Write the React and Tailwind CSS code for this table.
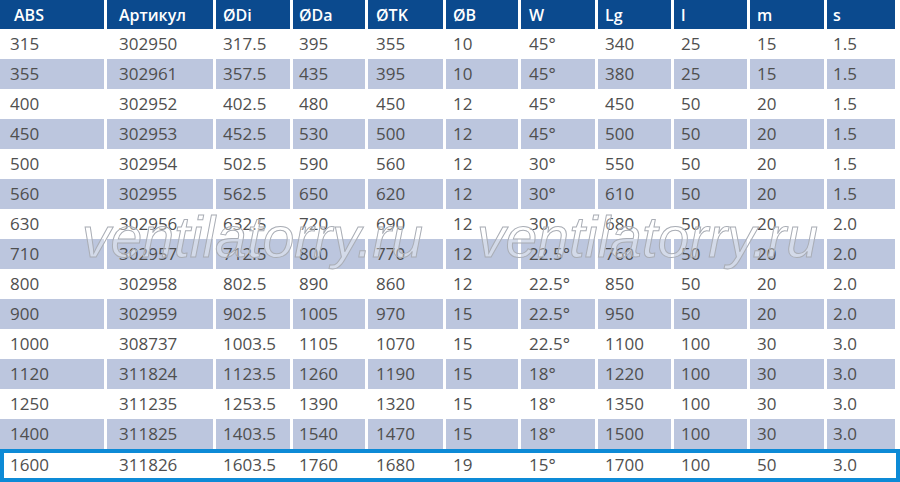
import React from "react";

const headers = ["ABS", "Артикул", "ØDi", "ØDa", "ØTK", "ØB", "W", "Lg", "l", "m", "s"];

const rows = [
    ["315", "302950", "317.5", "395", "355", "10", "45°", "340", "25", "15", "1.5"],
    ["355", "302961", "357.5", "435", "395", "10", "45°", "380", "25", "15", "1.5"],
    ["400", "302952", "402.5", "480", "450", "12", "45°", "450", "50", "20", "1.5"],
    ["450", "302953", "452.5", "530", "500", "12", "45°", "500", "50", "20", "1.5"],
    ["500", "302954", "502.5", "590", "560", "12", "30°", "550", "50", "20", "1.5"],
    ["560", "302955", "562.5", "650", "620", "12", "30°", "610", "50", "20", "1.5"],
    ["630", "302956", "632.5", "720", "690", "12", "30°", "680", "50", "20", "2.0"],
    ["710", "302957", "712.5", "800", "770", "12", "22.5°", "760", "50", "20", "2.0"],
    ["800", "302958", "802.5", "890", "860", "12", "22.5°", "850", "50", "20", "2.0"],
    ["900", "302959", "902.5", "1005", "970", "15", "22.5°", "950", "50", "20", "2.0"],
    ["1000", "308737", "1003.5", "1105", "1070", "15", "22.5°", "1100", "100", "30", "3.0"],
    ["1120", "311824", "1123.5", "1260", "1190", "15", "18°", "1220", "100", "30", "3.0"],
    ["1250", "311235", "1253.5", "1390", "1320", "15", "18°", "1350", "100", "30", "3.0"],
    ["1400", "311825", "1403.5", "1540", "1470", "15", "18°", "1500", "100", "30", "3.0"],
    ["1600", "311826", "1603.5", "1760", "1680", "19", "15°", "1700", "100", "50", "3.0"],
];

// left padding per column, read off the picture
const pads = ["pl-[10px]", "pl-[12px]", "pl-[7px]", "pl-[6px]", "pl-[8px]", "pl-[7px]", "pl-[8px]", "pl-[7px]", "pl-[7px]", "pl-[7px]", "pl-[6px]"];

const gridCls = "grid w-[900px] grid-cols-[104px_106px_74px_72px_75px_72px_74px_73px_73px_74px_68px] gap-x-[3px]";

const Watermark = ({className}) => (
    <span
        className={"pointer-events-none absolute select-none whitespace-nowrap text-[57px] italic leading-none text-[rgba(255,255,255,0.35)] [-webkit-text-stroke:1px_#a9adb5] " + className}
        style={{fontFamily: '"Liberation Sans", Arial, sans-serif'}}
    >
        ventilatorry.ru
    </span>
);

export default function App() {
    return (
        <div className="relative h-[482px] w-[900px] overflow-hidden bg-white text-[17px] text-[#4f4f4f]"
             style={{fontFamily: '"Open Sans", "Noto Sans", sans-serif'}}>
            <div className={gridCls + " h-[29px]"}>
                {headers.map((h, i) => (
                    <div key={h}
                         className={"flex items-center bg-[#0b4a8e] text-[16px] font-semibold text-white " + (i === 0 ? "pl-[14px]" : pads[i])}>
                        {h}
                    </div>
                ))}
            </div>
            {rows.map((r, ri) => {
                const last = ri === rows.length - 1;
                const shaded = ri % 2 === 1;
                return (
                    <div key={ri}
                         className={gridCls + (last ? " h-[33px] shadow-[inset_0_0_0_4px_#0d8ad6]" : " h-[30px]")}>
                        {r.map((c, ci) => (
                            <div key={ci}
                                 className={"flex items-center " + pads[ci] + (shaded ? " bg-[#bcc6de]" : "") + (last ? " pb-[2px]" : "")}>
                                {c}
                            </div>
                        ))}
                    </div>
                );
            })}
            <Watermark className="left-[82px] top-[209px]"/>
            <Watermark className="left-[477px] top-[209px]"/>
        </div>
    );
}
